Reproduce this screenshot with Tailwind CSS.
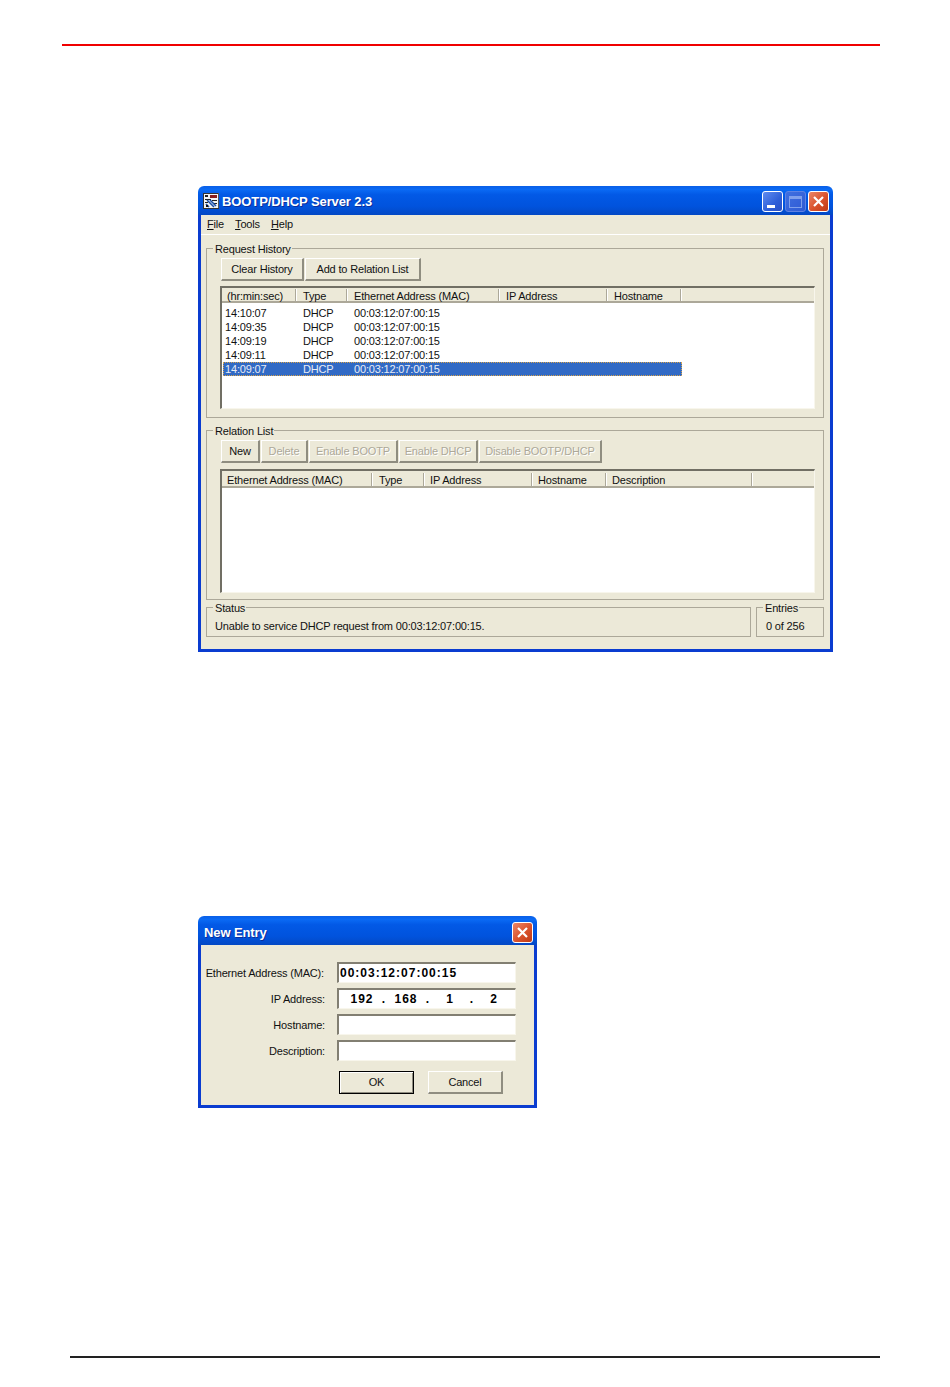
<!DOCTYPE html>
<html>
<head>
<meta charset="utf-8">
<script src="https://cdn.jsdelivr.net/npm/@tailwindcss/browser@4"></script>
</head>
<body class="bg-white">
<div class="w-[950px] h-[1387px] pt-[44px] overflow-hidden font-['Liberation_Sans',Arial,sans-serif] text-[11px] tracking-[-0.17px] leading-[14px] text-[#111]">
  <div class="ml-[62px] w-[818px] h-[2px] bg-[#f00000]"></div>

  <!-- BOOTP window -->
  <div class="ml-[198px] mt-[140px] w-[635px]">
    <div class="h-[29px] rounded-t-[6px] bg-[linear-gradient(180deg,#0a5fe8_0%,#0a6af4_12%,#0259e6_30%,#0153dd_70%,#0348c4_100%)] flex items-center pl-[5px] pr-[4px]">
      <svg width="16" height="16" viewBox="0 0 16 16" class="shrink-0 mt-[1px]"><rect width="16" height="16" fill="#f4f4f4"/><rect x="0" y="0" width="16" height="1" fill="#333"/><rect x="0" y="0" width="1" height="16" fill="#333"/><rect x="15" y="0" width="1" height="16" fill="#555"/><rect x="0" y="15" width="16" height="1" fill="#333"/><rect x="2" y="2" width="3" height="2" fill="#222"/><rect x="7" y="2" width="7" height="3" fill="#8a1c1c"/><rect x="2" y="6" width="6" height="1" fill="#222"/><rect x="2" y="9" width="3" height="1" fill="#222"/><rect x="9" y="7" width="5" height="1" fill="#222"/><rect x="10" y="10" width="4" height="1" fill="#222"/><path d="M4 7 L11 14 M7 7 L13 13 M3 11 L6 14" stroke="#1c50a8" stroke-width="1.6" fill="none"/><rect x="3" y="12" width="2" height="2" fill="#111"/></svg>
      <span class="ml-[3px] mt-[3px] font-bold text-[13px] tracking-[-0.1px] text-white [text-shadow:1px_1px_0_#0a2f9c] whitespace-nowrap">BOOTP/DHCP Server 2.3</span>
      <div class="ml-auto mt-[2px] flex gap-[2px]">
        <div class="w-[21px] h-[21px] rounded-[3px] border border-white bg-[linear-gradient(135deg,#5f8cf0,#2f5fd8_60%,#2a4fc4)] flex items-end pl-[4px] pb-[3px]"><div class="w-[8px] h-[3px] bg-white"></div></div>
        <div class="w-[21px] h-[21px] rounded-[3px] border border-[#5f82e2] bg-[linear-gradient(135deg,#3f6fe0,#2f5ad4)] flex items-center justify-center"><div class="w-[13px] h-[12px] border border-[#7f9fec] border-t-[3px]"></div></div>
        <div class="w-[21px] h-[21px] rounded-[3px] border border-white bg-[linear-gradient(135deg,#ec8668,#d9522c_55%,#bf3a16)] flex items-center justify-center"><svg width="13" height="13" viewBox="0 0 13 13"><path d="M2 2 L11 11 M11 2 L2 11" stroke="#fff" stroke-width="2.2"/></svg></div>
      </div>
    </div>
    <div class="border-x-[3px] border-b-[3px] border-[#0a3cd0] bg-[#ece9d8]">
      <div class="h-[20px] border-b border-white flex items-center pl-[6px] gap-[11px] pb-[1px]">
        <span><span class="underline">F</span>ile</span><span><span class="underline">T</span>ools</span><span><span class="underline">H</span>elp</span>
      </div>
      <div class="pl-[5px] pr-[6px] pt-[13px] pb-[12px] flex flex-col">
        <!-- Request History -->
        <div class="relative h-[170px] border border-[#aca899] pl-[13px] pr-[8px] pt-[9px]">
          <span class="absolute -top-[7px] left-[6px] bg-[#ece9d8] pl-[2px] pr-[1px] whitespace-nowrap">Request History</span>
          <div class="flex gap-[1px] ml-[1px]">
            <div class="w-[83px] h-[23px] flex items-center justify-center border border-t-white border-l-white border-r-[#8f8d80] border-b-[#8f8d80] border-r-2 border-b-2">Clear History</div>
            <div class="w-[116px] h-[23px] flex items-center justify-center border border-t-white border-l-white border-r-[#8f8d80] border-b-[#8f8d80] border-r-2 border-b-2">Add to Relation List</div>
          </div>
          <div class="mt-[5px] h-[123px] border-t-2 border-l-2 border-t-[#716f64] border-l-[#716f64] border-r border-b border-r-[#f8f6ec] border-b-[#f8f6ec] bg-white">
            <div class="h-[15px] flex bg-[#ece9d8] border-b-2 border-b-[#aca899] pt-[1px]">
              <div class="w-[74px] pl-[5px] border-r border-r-[#aca899]">(hr:min:sec)</div>
              <div class="w-[51px] pl-[6px] border-l border-l-white border-r border-r-[#aca899]">Type</div>
              <div class="w-[152px] pl-[6px] border-l border-l-white border-r border-r-[#aca899]">Ethernet Address (MAC)</div>
              <div class="w-[108px] pl-[6px] border-l border-l-white border-r border-r-[#aca899]">IP Address</div>
              <div class="w-[74px] pl-[6px] border-l border-l-white border-r border-r-[#aca899]">Hostname</div>
              <div class="flex-1 border-l border-l-white"></div>
            </div>
            <div class="pt-[3px] pl-[1px]">
              <div class="w-[459px] h-[14px] flex"><span class="w-[80px] pl-[2px]">14:10:07</span><span class="w-[51px]">DHCP</span><span>00:03:12:07:00:15</span></div>
              <div class="w-[459px] h-[14px] flex"><span class="w-[80px] pl-[2px]">14:09:35</span><span class="w-[51px]">DHCP</span><span>00:03:12:07:00:15</span></div>
              <div class="w-[459px] h-[14px] flex"><span class="w-[80px] pl-[2px]">14:09:19</span><span class="w-[51px]">DHCP</span><span>00:03:12:07:00:15</span></div>
              <div class="w-[459px] h-[14px] flex"><span class="w-[80px] pl-[2px]">14:09:11</span><span class="w-[51px]">DHCP</span><span>00:03:12:07:00:15</span></div>
              <div class="w-[459px] h-[14px] flex bg-[#316ac5] text-[#e8ecf6] outline outline-1 outline-dotted outline-[#d6a24a] -outline-offset-1"><span class="w-[80px] pl-[2px]">14:09:07</span><span class="w-[51px]">DHCP</span><span>00:03:12:07:00:15</span></div>
            </div>
          </div>
        </div>
        <!-- Relation List -->
        <div class="relative mt-[12px] h-[170px] border border-[#aca899] pl-[13px] pr-[8px] pt-[9px]">
          <span class="absolute -top-[7px] left-[6px] bg-[#ece9d8] pl-[2px] pr-[1px] whitespace-nowrap">Relation List</span>
          <div class="flex gap-[1px] ml-[1px]">
            <div class="w-[39px] h-[23px] flex items-center justify-center border border-t-white border-l-white border-r-[#8f8d80] border-b-[#8f8d80] border-r-2 border-b-2">New</div>
            <div class="w-[47px] h-[23px] flex items-center justify-center border border-t-white border-l-white border-r-[#8f8d80] border-b-[#8f8d80] border-r-2 border-b-2 text-[#aca899] [text-shadow:1px_1px_0_#fff]">Delete</div>
            <div class="w-[89px] h-[23px] flex items-center justify-center border border-t-white border-l-white border-r-[#8f8d80] border-b-[#8f8d80] border-r-2 border-b-2 text-[#aca899] [text-shadow:1px_1px_0_#fff]">Enable BOOTP</div>
            <div class="w-[79px] h-[23px] flex items-center justify-center border border-t-white border-l-white border-r-[#8f8d80] border-b-[#8f8d80] border-r-2 border-b-2 text-[#aca899] [text-shadow:1px_1px_0_#fff]">Enable DHCP</div>
            <div class="w-[123px] h-[23px] flex items-center justify-center whitespace-nowrap border border-t-white border-l-white border-r-[#8f8d80] border-b-[#8f8d80] border-r-2 border-b-2 text-[#aca899] [text-shadow:1px_1px_0_#fff]">Disable BOOTP/DHCP</div>
          </div>
          <div class="mt-[6px] h-[124px] border-t-2 border-l-2 border-t-[#716f64] border-l-[#716f64] border-r border-b border-r-[#f8f6ec] border-b-[#f8f6ec] bg-white">
            <div class="h-[17px] flex bg-[#ece9d8] border-b-2 border-b-[#aca899] pt-[2px]">
              <div class="w-[150px] pl-[5px] border-r border-r-[#aca899]">Ethernet Address (MAC)</div>
              <div class="w-[52px] pl-[6px] border-l border-l-white border-r border-r-[#aca899]">Type</div>
              <div class="w-[108px] pl-[5px] border-l border-l-white border-r border-r-[#aca899]">IP Address</div>
              <div class="w-[74px] pl-[5px] border-l border-l-white border-r border-r-[#aca899]">Hostname</div>
              <div class="w-[146px] pl-[5px] border-l border-l-white border-r border-r-[#aca899]">Description</div>
              <div class="flex-1 border-l border-l-white"></div>
            </div>
          </div>
        </div>
        <!-- Status -->
        <div class="mt-[7px] flex gap-[5px]">
          <div class="relative w-[545px] h-[30px] border border-[#aca899] pl-[8px] pt-[11px]">
            <span class="absolute -top-[7px] left-[6px] bg-[#ece9d8] pl-[2px] pr-[1px]">Status</span>
            Unable to service DHCP request from 00:03:12:07:00:15.
          </div>
          <div class="relative w-[68px] h-[30px] border border-[#aca899] pl-[9px] pt-[11px]">
            <span class="absolute -top-[7px] left-[6px] bg-[#ece9d8] pl-[2px] pr-[1px]">Entries</span>
            0 of 256
          </div>
        </div>
      </div>
    </div>
  </div>

  <!-- New Entry dialog -->
  <div class="ml-[198px] mt-[264px] w-[339px]">
    <div class="h-[29px] rounded-t-[6px] bg-[linear-gradient(180deg,#0a5fe8_0%,#0a6af4_12%,#0259e6_30%,#0153dd_70%,#0348c4_100%)] flex items-center pl-[6px] pr-[4px]">
      <span class="mt-[5px] font-bold text-[13px] tracking-[-0.1px] text-white [text-shadow:1px_1px_0_#0a2f9c]">New Entry</span>
      <div class="ml-auto mt-[4px] w-[21px] h-[21px] rounded-[3px] border border-white bg-[linear-gradient(135deg,#ec8668,#d9522c_55%,#bf3a16)] flex items-center justify-center"><svg width="13" height="13" viewBox="0 0 13 13"><path d="M2 2 L11 11 M11 2 L2 11" stroke="#fff" stroke-width="2.2"/></svg></div>
    </div>
    <div class="border-x-[3px] border-b-[3px] border-[#0a3cd0] bg-[#ece9d8] pt-[17px] pb-[11px]">
      <div class="flex flex-col gap-[5px]">
        <div class="flex items-center h-[21px]"><span class="w-[123px] text-right whitespace-nowrap">Ethernet Address (MAC):</span><div class="ml-[13px] w-[179px] h-[21px] bg-white border-t-2 border-l-2 border-t-[#827f72] border-l-[#827f72] border-r border-b border-r-[#f8f6ec] border-b-[#f8f6ec] pl-[1px] flex items-center font-bold text-[12px] tracking-[1px] text-black">00:03:12:07:00:15</div></div>
        <div class="flex items-center h-[21px]"><span class="w-[124px] text-right">IP Address:</span><div class="ml-[12px] w-[179px] h-[21px] bg-white border-t-2 border-l-2 border-t-[#827f72] border-l-[#827f72] border-r border-b border-r-[#f8f6ec] border-b-[#f8f6ec] pl-[4px] flex items-center font-bold text-[12px] tracking-[1px] text-black"><span class="w-[38px] text-center">192</span><span class="w-[6px] text-center">.</span><span class="w-[38px] text-center">168</span><span class="w-[6px] text-center">.</span><span class="w-[38px] text-center">1</span><span class="w-[6px] text-center">.</span><span class="w-[38px] text-center">2</span></div></div>
        <div class="flex items-center h-[21px]"><span class="w-[124px] text-right">Hostname:</span><div class="ml-[12px] w-[179px] h-[21px] bg-white border-t-2 border-l-2 border-t-[#827f72] border-l-[#827f72] border-r border-b border-r-[#f8f6ec] border-b-[#f8f6ec]"></div></div>
        <div class="flex items-center h-[21px]"><span class="w-[124px] text-right">Description:</span><div class="ml-[12px] w-[179px] h-[21px] bg-white border-t-2 border-l-2 border-t-[#827f72] border-l-[#827f72] border-r border-b border-r-[#f8f6ec] border-b-[#f8f6ec]"></div></div>
      </div>
      <div class="mt-[10px] ml-[138px] flex gap-[14px]">
        <div class="w-[75px] h-[23px] border border-black flex items-center justify-center pb-[1px] shadow-[inset_1px_1px_0_#fff,inset_-1px_-1px_0_#8f8d80]">OK</div>
        <div class="w-[75px] h-[23px] flex items-center justify-center border border-t-white border-l-white border-r-[#8f8d80] border-b-[#8f8d80] border-r-2 border-b-2">Cancel</div>
      </div>
    </div>
  </div>

  <div class="ml-[70px] mt-[248px] w-[810px] h-[2px] bg-[#222]"></div>
</div>
</body>
</html>
